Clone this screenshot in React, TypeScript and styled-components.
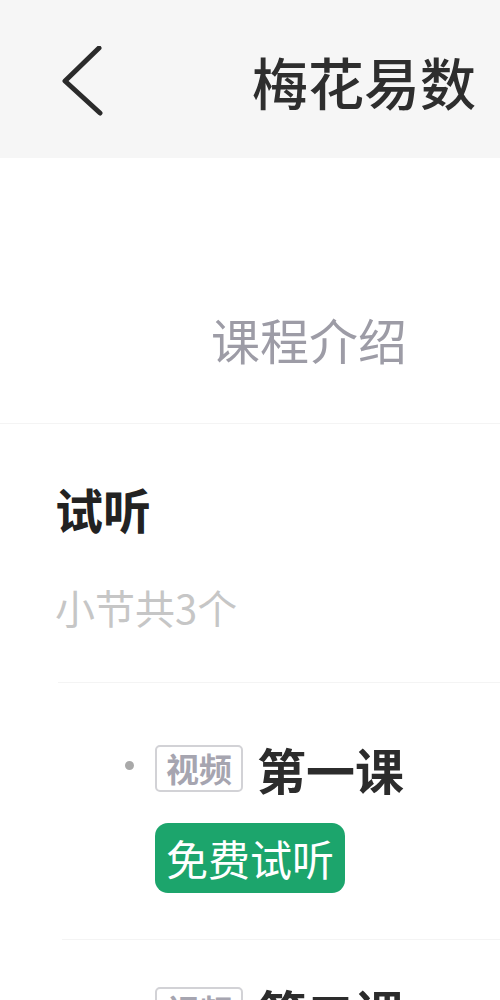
import React from "react";
import styled, { createGlobalStyle } from "styled-components";

const Global = createGlobalStyle`
  html, body { margin: 0; padding: 0; background: #ffffff; }
  body { font-family: "Noto Sans CJK SC", "Noto Sans", sans-serif; overflow: hidden; }
`;

const Page = styled.div`
  width: 500px;
  min-height: 1000px;
  background: #fff;
  display: flex;
  flex-direction: column;
`;

const Header = styled.header`
  height: 158px;
  background: #f6f6f6;
  display: flex;
  align-items: center;
  padding-left: 60px;
  padding-right: 24px;
  box-sizing: border-box;
`;

const BackButton = styled.button`
  border: 0;
  background: transparent;
  padding: 0;
  width: 44px;
  height: 70px;
  display: flex;
  align-items: center;
  justify-content: flex-start;
  margin-top: 4px;
`;

const Title = styled.h1`
  margin: 0 0 0 auto;
  font-size: 56px;
  line-height: 1;
  font-weight: 500;
  color: #2e2e2e;
  margin-top: 4px;
`;

const TabArea = styled.div`
  height: 266px;
  box-sizing: border-box;
  padding-top: 156px;
  padding-left: 211px;
  border-bottom: 1px solid #f4f4f4;
`;

const TabLabel = styled.span`
  font-size: 49px;
  line-height: 1;
  color: #9d9ca6;
  display: block;
`;

const Section = styled.section`
  display: flex;
  flex-direction: column;
`;

const SectionTitle = styled.h2`
  margin: 60px 0 0 55px;
  font-size: 48px;
  line-height: 1;
  font-weight: 700;
  color: #222;
`;

const SectionSub = styled.div`
  margin: 55px 0 0 55px;
  font-size: 40px;
  line-height: 1;
  color: #c6c6c6;
`;

const Divider = styled.div<{ $top: number; $left: number }>`
  margin-top: ${(p) => p.$top}px;
  margin-left: ${(p) => p.$left}px;
  height: 1px;
  background: #f4f4f4;
`;

const Lesson = styled.div<{ $top: number }>`
  display: flex;
  flex-direction: column;
  margin-top: ${(p) => p.$top}px;
`;

const LessonRow = styled.div`
  display: flex;
  align-items: center;
  padding-left: 125px;
`;

const Dot = styled.span`
  width: 9px;
  height: 9px;
  border-radius: 50%;
  background: #a9a9a9;
  margin-right: 21px;
  margin-top: -6px;
`;

const Tag = styled.span`
  box-sizing: border-box;
  width: 88px;
  height: 47px;
  border: 2px solid #d2d2d6;
  border-radius: 5px;
  display: flex;
  align-items: center;
  justify-content: center;
  font-size: 33px;
  font-weight: 700;
  color: #a6a5b0;
  line-height: 1;
`;

const LessonName = styled.span`
  margin-left: 14px;
  font-size: 49px;
  font-weight: 700;
  line-height: 1;
  color: #2c2c2c;
`;

const FreeButton = styled.button`
  margin: 30px 0 0 155px;
  width: 190px;
  height: 70px;
  border: 0;
  border-radius: 13px;
  background: #1ca56c;
  color: #fff;
  font-family: "Noto Sans CJK SC", "Noto Sans", sans-serif;
  font-size: 42px;
  line-height: 1;
  padding: 0;
  display: flex;
  align-items: center;
  justify-content: center;
`;

const lessons = [
  { name: "第一课", free: true },
  { name: "第二课", free: false },
];

export default function App() {
  return (
    <Page>
      <Global />
      <Header>
        <BackButton aria-label="返回">
          <svg width="44" height="70" viewBox="0 0 44 70" fill="none">
            <path
              d="M39 2 L5 35 L40 67"
              stroke="#2b2b2b"
              strokeWidth="5"
              strokeLinecap="round"
              strokeLinejoin="round"
            />
          </svg>
        </BackButton>
        <Title>梅花易数</Title>
      </Header>
      <TabArea>
        <TabLabel>课程介绍</TabLabel>
      </TabArea>
      <Section>
        <SectionTitle>试听</SectionTitle>
        <SectionSub>小节共3个</SectionSub>
        <Divider $top={55} $left={58} />
        {lessons.map((l, i) => (
          <React.Fragment key={l.name}>
            {i > 0 && <Divider $top={46} $left={62} />}
            <Lesson $top={i === 0 ? 61 : 46}>
              <LessonRow>
                <Dot />
                <Tag>视频</Tag>
                <LessonName>{l.name}</LessonName>
              </LessonRow>
              {l.free && <FreeButton>免费试听</FreeButton>}
            </Lesson>
          </React.Fragment>
        ))}
      </Section>
    </Page>
  );
}
